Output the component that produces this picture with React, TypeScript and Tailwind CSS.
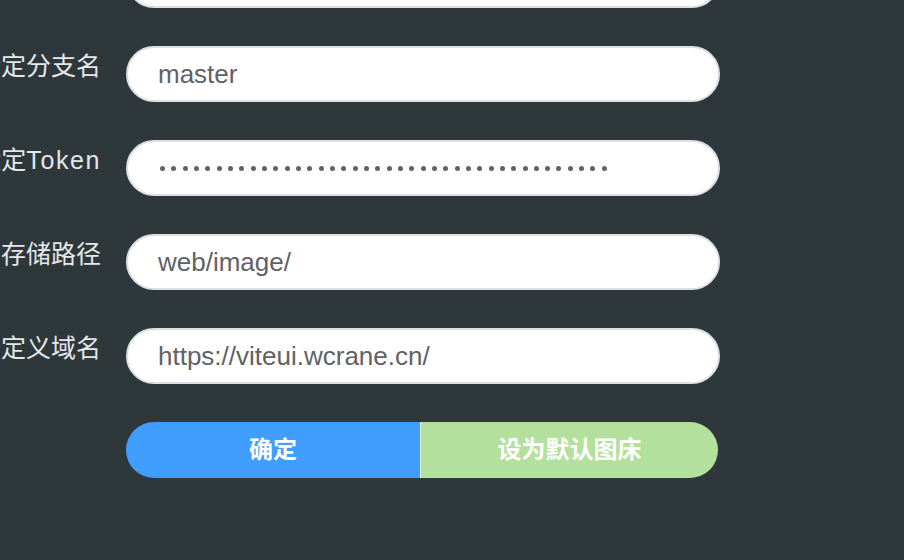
import React from "react";

const font = { fontFamily: '"Liberation Sans", "Noto Sans CJK SC", sans-serif' };

function Row({ label, children }: { label: React.ReactNode; children: React.ReactNode }) {
  return (
    <div className="flex items-start gap-[25px]">
      <div className="flex w-[101px] shrink-0 justify-end">
        <span className="whitespace-nowrap text-[25px] leading-[41px] text-[#e5e7eb]">{label}</span>
      </div>
      <div className="flex h-[56px] w-[594px] shrink-0 items-center rounded-full border-2 border-[#dcdfe6] bg-white pl-[30px] text-[26px] text-[#606266]">
        {children}
      </div>
    </div>
  );
}

export default function App() {
  const dots = Array.from({ length: 40 });
  return (
    <div className="h-[560px] w-full overflow-hidden bg-[#2e383b]" style={font}>
      <div className="mt-[-48px] flex flex-col gap-[38px]">
        <Row label="设定仓库名">
          <span>wcrane/images</span>
        </Row>
        <Row label="设定分支名">
          <span>master</span>
        </Row>
        <Row
          label={
            <>
              设定<span className="tracking-[1.6px]">Token</span>
            </>
          }
        >
          <div className="flex items-center gap-[6.33px] pl-[2px]">
            {dots.map((_, i) => (
              <span key={i} className="block h-[5px] w-[5px] rounded-full bg-[#606266]" />
            ))}
          </div>
        </Row>
        <Row label="图片存储路径">
          <span>web/image/</span>
        </Row>
        <Row label="自定义域名">
          <span>https://viteui.wcrane.cn/</span>
        </Row>
        <div className="ml-[126px] flex h-[56px] w-[592px]">
          <div className="flex w-[294px] items-center justify-center rounded-l-full bg-[#409eff] text-[24px] font-bold text-white">
            确定
          </div>
          <div className="w-px bg-[#e1f3d8]" />
          <div className="flex flex-1 items-center justify-center rounded-r-full bg-[#b3e19d] text-[24px] font-bold text-white">
            设为默认图床
          </div>
        </div>
      </div>
    </div>
  );
}
